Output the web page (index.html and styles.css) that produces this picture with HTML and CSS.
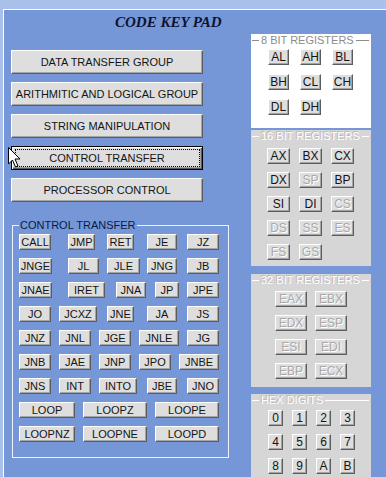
FILE: index.html
```html
<!DOCTYPE html>
<html lang="en">
<head>
  <meta charset="UTF-8">
  <meta name="viewport" content="width=device-width, initial-scale=1.0">
  <title>Code Key Pad</title>
  <link rel="stylesheet" href="styles.css">
</head>
<body>
  <div class="form">
    <div class="left">
      <h1 class="title">CODE KEY PAD</h1>

      <div class="groups">
        <button class="btn group-btn">DATA TRANSFER GROUP</button>
        <button class="btn group-btn">ARITHMITIC AND LOGICAL GROUP</button>
        <button class="btn group-btn">STRING MANIPULATION</button>
        <button class="btn group-btn focus">CONTROL TRANSFER</button>
        <button class="btn group-btn">PROCESSOR CONTROL</button>
      </div>

      <!-- instructions of the selected group -->
      <fieldset class="ct">
        <legend>CONTROL TRANSFER</legend>
        <div class="ct-rows">
          <div class="row">
            <button class="btn key w32">CALL</button>
            <button class="btn key w27 m17">JMP</button>
            <button class="btn key w27 m12">RET</button>
            <button class="btn key w30 m13">JE</button>
            <button class="btn key w32 m10">JZ</button>
          </div>
          <div class="row">
            <button class="btn key w33">JNGE</button>
            <button class="btn key w31 m16">JL</button>
            <button class="btn key w33 m8">JLE</button>
            <button class="btn key w30 m7">JNG</button>
            <button class="btn key w32 m10">JB</button>
          </div>
          <div class="row">
            <button class="btn key w33">JNAE</button>
            <button class="btn key w37 m16">IRET</button>
            <button class="btn key w30 m11">JNA</button>
            <button class="btn key w24 m9">JP</button>
            <button class="btn key w32 m8">JPE</button>
          </div>
          <div class="row">
            <button class="btn key w32">JO</button>
            <button class="btn key w38 m8">JCXZ</button>
            <button class="btn key w27 m10">JNE</button>
            <button class="btn key w30 m13">JA</button>
            <button class="btn key w32 m10">JS</button>
          </div>
          <div class="row">
            <button class="btn key w32">JNZ</button>
            <button class="btn key w32 m8">JNL</button>
            <button class="btn key w32 m8">JGE</button>
            <button class="btn key w40 m8">JNLE</button>
            <button class="btn key w32 m8">JG</button>
          </div>
          <div class="row">
            <button class="btn key w32">JNB</button>
            <button class="btn key w32 m8">JAE</button>
            <button class="btn key w32 m8">JNP</button>
            <button class="btn key w32 m8">JPO</button>
            <button class="btn key w40 m8">JNBE</button>
          </div>
          <div class="row">
            <button class="btn key w32">JNS</button>
            <button class="btn key w32 m8">INT</button>
            <button class="btn key w38 m8">INTO</button>
            <button class="btn key w30 m10">JBE</button>
            <button class="btn key w32 m10">JNO</button>
          </div>
          <div class="row">
            <button class="btn key w56">LOOP</button>
            <button class="btn key w64 m8">LOOPZ</button>
            <button class="btn key w64 m8">LOOPE</button>
          </div>
          <div class="row">
            <button class="btn key w56">LOOPNZ</button>
            <button class="btn key w64 m8">LOOPNE</button>
            <button class="btn key w64 m8">LOOPD</button>
          </div>
        </div>
      </fieldset>
    </div>

    <div class="right">
      <div class="panel p8">
        <div class="panel-head">8 BIT REGISTERS</div>
        <div class="keys k8">
          <button class="btn reg">AL</button>
          <button class="btn reg">AH</button>
          <button class="btn reg">BL</button>
          <button class="btn reg">BH</button>
          <button class="btn reg">CL</button>
          <button class="btn reg">CH</button>
          <button class="btn reg">DL</button>
          <button class="btn reg">DH</button>
        </div>
      </div>

      <div class="panel grey p16">
        <div class="panel-head">16 BIT REGISTERS</div>
        <div class="keys k16">
          <button class="btn reg">AX</button>
          <button class="btn reg">BX</button>
          <button class="btn reg">CX</button>
          <button class="btn reg">DX</button>
          <button class="btn reg off" disabled>SP</button>
          <button class="btn reg">BP</button>
          <button class="btn reg">SI</button>
          <button class="btn reg">DI</button>
          <button class="btn reg off" disabled>CS</button>
          <button class="btn reg off" disabled>DS</button>
          <button class="btn reg off" disabled>SS</button>
          <button class="btn reg off" disabled>ES</button>
          <button class="btn reg off" disabled>FS</button>
          <button class="btn reg off" disabled>GS</button>
        </div>
      </div>

      <div class="panel grey p32">
        <div class="panel-head">32 BIT REGISTERS</div>
        <div class="keys k32">
          <button class="btn reg off" disabled>EAX</button>
          <button class="btn reg off" disabled>EBX</button>
          <button class="btn reg off" disabled>EDX</button>
          <button class="btn reg off" disabled>ESP</button>
          <button class="btn reg off" disabled>ESI</button>
          <button class="btn reg off" disabled>EDI</button>
          <button class="btn reg off" disabled>EBP</button>
          <button class="btn reg off" disabled>ECX</button>
        </div>
      </div>

      <div class="panel grey phex">
        <div class="panel-head">HEX DIGITS</div>
        <div class="keys khex">
          <button class="btn reg">0</button>
          <button class="btn reg">1</button>
          <button class="btn reg">2</button>
          <button class="btn reg">3</button>
          <button class="btn reg">4</button>
          <button class="btn reg">5</button>
          <button class="btn reg">6</button>
          <button class="btn reg">7</button>
          <button class="btn reg">8</button>
          <button class="btn reg">9</button>
          <button class="btn reg">A</button>
          <button class="btn reg">B</button>
        </div>
      </div>
    </div>
  </div>

  <svg class="cursor" width="13" height="21" viewBox="0 0 13 21">
    <path d="M0.5 0.5 V17 L4.5 13 L7.5 20 L10 19 L7 12 H12 Z" fill="#fff" stroke="#000" stroke-width="1"/>
  </svg>
</body>
</html>
```

FILE: styles.css
```css
body {
  margin: 0;
  background-color: #a9c0ea;
  font-family: "Liberation Sans", Arial, sans-serif;
  overflow: hidden;
}
.form {
  margin: 9px 0 0 3px;
  height: 467px;
  border-top: 1px solid #fff;
  border-left: 1px solid #fff;
  background-color: #7597d8;
  display: flex;
  align-items: flex-start;
}
.left {
  margin-left: 7px;
  width: 217px;
}
.title {
  margin: 3px 0 0 104px;
  font: italic bold 15px/18px "Liberation Serif", "Times New Roman", serif;
  color: #0e1430;
  white-space: nowrap;
}

/* windows style 3d button */
.btn {
  box-sizing: border-box;
  padding: 0;
  margin: 0;
  background-color: #dedede;
  color: #141414;
  font-family: "Liberation Sans", Arial, sans-serif;
  border: 1px solid;
  border-color: #fff #5c5c5c #5c5c5c #fff;
  box-shadow: inset -1px -1px #a4a4a4;
  display: flex;
  align-items: center;
  justify-content: center;
  white-space: nowrap;
}
.groups {
  margin-top: 19px;
  display: flex;
  flex-direction: column;
  gap: 8px;
}
.group-btn {
  width: 192px;
  height: 24px;
  font-size: 11px;
}
.focus {
  position: relative;
  border-color: #000;
  box-shadow: inset 1px 1px #fff, inset -1px -1px #5c5c5c, inset -2px -2px #a4a4a4;
}
.focus::after {
  content: "";
  position: absolute;
  top: 2px;
  right: 2px;
  bottom: 2px;
  left: 3px;
  border: 1px dotted #000;
}

.ct {
  margin: 17px 0 0 1px;
  padding: 2px 0 15px 6px;
  width: 217px;
  min-width: 0;
  box-sizing: border-box;
  border: 1px solid #eef2fc;
}
.ct legend {
  padding: 0 1px;
  font-size: 11px;
  line-height: 13px;
  color: #0b1a45;
}
.ct-rows {
  display: flex;
  flex-direction: column;
  gap: 8px;
}
.row {
  display: flex;
  height: 16px;
}
.key {
  height: 16px;
  font-size: 11px;
}
.w24 { width: 24px; }
.w27 { width: 27px; }
.w30 { width: 30px; }
.w31 { width: 31px; }
.w32 { width: 32px; }
.w33 { width: 33px; }
.w37 { width: 37px; }
.w38 { width: 38px; }
.w40 { width: 40px; }
.w56 { width: 56px; }
.w64 { width: 64px; }
.m7 { margin-left: 7px; }
.m8 { margin-left: 8px; }
.m9 { margin-left: 9px; }
.m10 { margin-left: 10px; }
.m11 { margin-left: 11px; }
.m12 { margin-left: 12px; }
.m13 { margin-left: 13px; }
.m16 { margin-left: 16px; }
.m17 { margin-left: 17px; }

.right {
  margin-left: 23px;
  width: 120px;
  display: flex;
  flex-direction: column;
}
.panel {
  box-sizing: border-box;
  background-color: #fff;
}
.panel.grey {
  background-color: #d6d6d6;
}
.p8 { margin-top: 24px; height: 94px; }
.p16 { margin-top: 2px; height: 136px; }
.p32 { margin-top: 8px; height: 113px; }
.phex { margin-top: 7px; height: 90px; }

.panel-head {
  display: flex;
  align-items: center;
  gap: 2px;
  height: 13px;
  padding: 0 2px 0 1px;
  font-size: 11px;
  line-height: 13px;
  color: #8c8c8c;
  white-space: nowrap;
}
.panel-head::before {
  content: "";
  width: 7px;
  border-top: 1px solid;
}
.panel-head::after {
  content: "";
  flex: 1;
  border-top: 1px solid;
}
.grey .panel-head {
  color: #fff;
  text-shadow: -1px -1px 0 #b8b8b8;
}

.keys {
  display: grid;
  grid-auto-rows: 16px;
}
.reg {
  height: 16px;
  font-size: 12px;
}
.reg.off {
  color: #a9a9a9;
  text-shadow: 1px 1px 0 #fff;
}
.k8 {
  margin-top: 2px;
  padding-left: 17px;
  grid-template-columns: repeat(3, 21px);
  column-gap: 11px;
  row-gap: 9px;
}
.k16 {
  margin-top: 5px;
  padding-left: 16px;
  grid-template-columns: repeat(3, 23px);
  column-gap: 9px;
  row-gap: 8px;
}
.k32 {
  margin-top: 4px;
  padding-left: 24px;
  grid-template-columns: repeat(2, 32px);
  column-gap: 8px;
  row-gap: 8px;
}
.khex {
  margin-top: 3px;
  padding-left: 17px;
  grid-template-columns: repeat(4, 15px);
  column-gap: 9px;
  row-gap: 8px;
}

.cursor {
  position: absolute;
  left: 8px;
  top: 147px;
}
```
